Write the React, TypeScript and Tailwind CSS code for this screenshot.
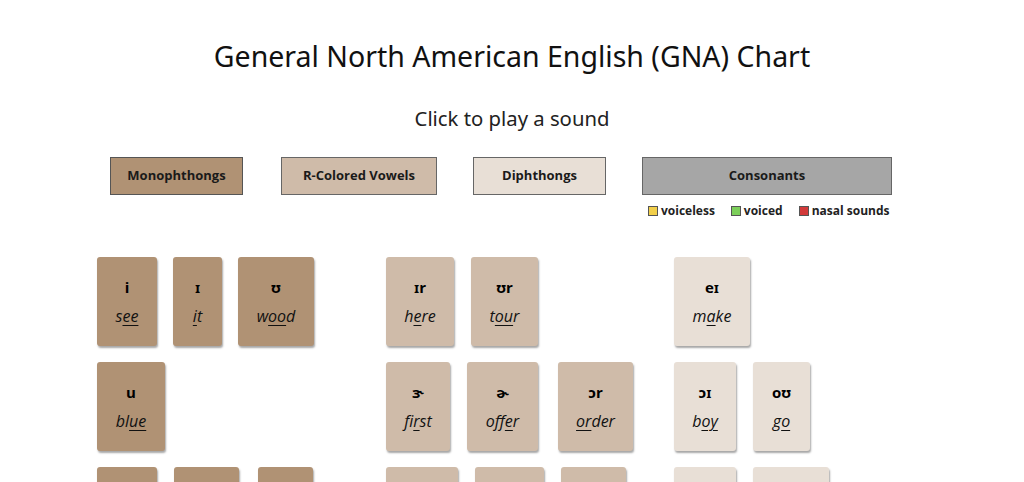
type Card = { ipa: string; pre: string; mark: string; post: string; w: string; ml?: string };
type Group = { tone: string; cards: Card[] };

const mono = 'bg-[#b09274]';
const rcol = 'bg-[#cfbba9]';
const diph = 'bg-[#e8dfd6]';

const rows: Group[][] = [
  [
    {
      tone: mono,
      cards: [
        { ipa: 'i', pre: 's', mark: 'ee', post: '', w: 'w-[60px]' },
        { ipa: 'ɪ', pre: '', mark: 'i', post: 't', w: 'w-[49px]', ml: 'ml-[16px]' },
        { ipa: 'ʊ', pre: 'w', mark: 'oo', post: 'd', w: 'w-[76px]', ml: 'ml-[16px]' },
      ],
    },
    {
      tone: rcol,
      cards: [
        { ipa: 'ɪr', pre: 'h', mark: 'e', post: 're', w: 'w-[68px]' },
        { ipa: 'ʊr', pre: 't', mark: 'ou', post: 'r', w: 'w-[67px]', ml: 'ml-[17px]' },
      ],
    },
    {
      tone: diph,
      cards: [{ ipa: 'eɪ', pre: 'm', mark: 'a', post: 'ke', w: 'w-[76px]' }],
    },
  ],
  [
    {
      tone: mono,
      cards: [{ ipa: 'u', pre: 'bl', mark: 'ue', post: '', w: 'w-[68px]' }],
    },
    {
      tone: rcol,
      cards: [
        { ipa: 'ɝ', pre: 'f', mark: 'ir', post: 'st', w: 'w-[64px]' },
        { ipa: 'ɚ', pre: 'off', mark: 'e', post: 'r', w: 'w-[71px]', ml: 'ml-[17px]' },
        { ipa: 'ɔr', pre: '', mark: 'or', post: 'der', w: 'w-[75px]', ml: 'ml-[20px]' },
      ],
    },
    {
      tone: diph,
      cards: [
        { ipa: 'ɔɪ', pre: 'b', mark: 'oy', post: '', w: 'w-[62px]' },
        { ipa: 'oʊ', pre: 'g', mark: 'o', post: '', w: 'w-[57px]', ml: 'ml-[17px]' },
      ],
    },
  ],
  [
    {
      tone: mono,
      cards: [
        { ipa: 'ɛ', pre: 'b', mark: 'e', post: 'd', w: 'w-[60px]' },
        { ipa: 'ʌ', pre: 'c', mark: 'u', post: 'p', w: 'w-[65px]', ml: 'ml-[17px]' },
        { ipa: 'ɔ', pre: 'l', mark: 'aw', post: '', w: 'w-[55px]', ml: 'ml-[19px]' },
      ],
    },
    {
      tone: rcol,
      cards: [
        { ipa: 'ɛr', pre: 'h', mark: 'air', post: '', w: 'w-[72px]' },
        { ipa: 'ɑr', pre: 'c', mark: 'ar', post: '', w: 'w-[69px]', ml: 'ml-[17px]' },
        { ipa: 'ɚ', pre: 'b', mark: 'ir', post: 'd', w: 'w-[65px]', ml: 'ml-[17px]' },
      ],
    },
    {
      tone: diph,
      cards: [
        { ipa: 'aɪ', pre: 'm', mark: 'y', post: '', w: 'w-[62px]' },
        { ipa: 'aʊ', pre: 'n', mark: 'ow', post: '', w: 'w-[76px]', ml: 'ml-[17px]' },
      ],
    },
  ],
];

const groupWidths = ['w-[289px]', 'w-[288px]', 'w-[300px]'];

function SoundCard({ card, tone }: { card: Card; tone: string }) {
  return (
    <button
      className={`${card.w} ${card.ml ?? ''} ${tone} flex h-[89px] shrink-0 flex-col items-center justify-center rounded-[3px] shadow-[1px_2px_2px_rgba(0,0,0,0.35)]`}
    >
      <span className="text-[15px] font-bold leading-none text-black">{card.ipa}</span>
      <span className="mt-[13px] text-[16px] italic leading-none text-[#111]">
        {card.pre}
        <span className="underline decoration-1 underline-offset-[3px]">{card.mark}</span>
        {card.post}
      </span>
    </button>
  );
}

function Key({ color, label }: { color: string; label: string }) {
  return (
    <span className="flex items-center gap-[3px]">
      <span className={`h-[10px] w-[10px] border border-[#555] ${color}`} />
      <span className="text-[12px] font-bold leading-none text-[#222]">{label}</span>
    </span>
  );
}

export default function App() {
  return (
    <div className="min-h-screen bg-white pb-10 font-['Open_Sans','Noto_Sans',sans-serif]">
      <header className="flex flex-col items-center pt-[38px]">
        <h1 className="font-['Noto_Sans','Open_Sans',sans-serif] text-[28.5px] leading-[36px] text-[#111]">
          General North American English (GNA) Chart
        </h1>
        <p className="mt-[30px] font-['Noto_Sans','Open_Sans',sans-serif] text-[20.3px] leading-[28px] text-[#222]">
          Click to play a sound
        </p>
      </header>

      <div className="mt-[25px] flex pl-[110px]">
        <div className="flex h-[38px] w-[133px] items-center justify-center border border-[#555] bg-[#b09274] text-[13px] font-bold text-[#1a1a1a]">
          Monophthongs
        </div>
        <div className="ml-[38px] flex h-[38px] w-[156px] items-center justify-center border border-[#666] bg-[#cfbba9] text-[13px] font-bold text-[#1a1a1a]">
          R-Colored Vowels
        </div>
        <div className="ml-[36px] flex h-[38px] w-[133px] items-center justify-center border border-[#666] bg-[#e8dfd6] text-[13px] font-bold text-[#1a1a1a]">
          Diphthongs
        </div>
        <div className="ml-[36px] flex flex-col">
          <div className="flex h-[38px] w-[250px] items-center justify-center border border-[#666] bg-[#a6a6a6] text-[13px] font-bold text-[#1a1a1a]">
            Consonants
          </div>
          <div className="mt-[10px] flex gap-[16px] pl-[6px]">
            <Key color="bg-[#f2cf4a]" label="voiceless" />
            <Key color="bg-[#7ccf5a]" label="voiced" />
            <Key color="bg-[#d23a3a]" label="nasal sounds" />
          </div>
        </div>
      </div>

      <div className="mt-[40px] flex flex-col gap-[16px] pl-[97px]">
        {rows.map((row, i) => (
          <div key={i} className="flex">
            {row.map((group, j) => (
              <div key={j} className={`${groupWidths[j]} flex shrink-0`}>
                {group.cards.map((card) => (
                  <SoundCard key={card.ipa + card.pre} card={card} tone={group.tone} />
                ))}
              </div>
            ))}
          </div>
        ))}
      </div>
    </div>
  );
}
